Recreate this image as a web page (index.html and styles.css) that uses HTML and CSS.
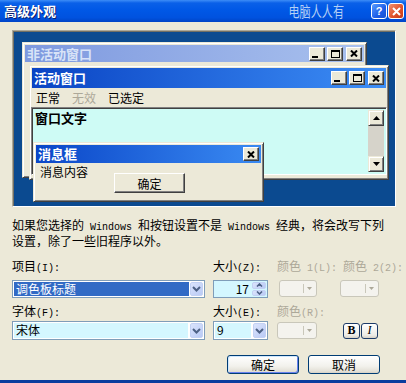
FILE: index.html
```html
<!DOCTYPE html>
<html lang="zh-CN">
<head>
    <meta charset="UTF-8">
    <title>高级外观</title>
    <link rel="stylesheet" href="styles.css">
</head>
<body>
    <div class="dialog">
        <div class="titlebar">
            <span class="title">高级外观</span>
            <span class="watermark">电脑人人有</span>
            <span class="tb-btn help">?</span>
            <span class="tb-btn close">
                <svg width="9" height="9" viewBox="0 0 9 9"><path d="M1 1l7 7M8 1l-7 7" stroke="#fff" stroke-width="2"/></svg>
            </span>
        </div>

        <!-- preview of the window parts -->
        <div class="preview">
            <div class="win inactive">
                <div class="caption">
                    <span class="cap-text">非活动窗口</span>
                    <span class="cap-btns">
                        <span class="cap-btn min"><svg width="6" height="2"><rect width="6" height="2"/></svg></span>
                        <span class="cap-btn"><svg width="9" height="8"><rect x="0.5" y="0.5" width="8" height="7" fill="none" stroke="#000"/><rect width="9" height="2"/></svg></span>
                        <span class="cap-btn gap"><svg width="8" height="7"><path d="M1 0.5l6 6M7 0.5l-6 6" stroke="#000" stroke-width="2"/></svg></span>
                    </span>
                </div>
            </div>

            <div class="win active">
                <div class="caption">
                    <span class="cap-text">活动窗口</span>
                    <span class="cap-btns">
                        <span class="cap-btn min"><svg width="6" height="2"><rect width="6" height="2"/></svg></span>
                        <span class="cap-btn"><svg width="9" height="8"><rect x="0.5" y="0.5" width="8" height="7" fill="none" stroke="#000"/><rect width="9" height="2"/></svg></span>
                        <span class="cap-btn gap"><svg width="8" height="7"><path d="M1 0.5l6 6M7 0.5l-6 6" stroke="#000" stroke-width="2"/></svg></span>
                    </span>
                </div>
                <div class="menu">
                    <span>正常</span>
                    <span class="dim">无效</span>
                    <span>已选定</span>
                </div>
                <div class="wintext">
                    <span class="wintext-label">窗口文字</span>
                    <div class="scrollbar">
                        <span class="sb-btn"><svg width="7" height="4"><path d="M3.5 0L7 4H0z"/></svg></span>
                        <span class="sb-track"></span>
                        <span class="sb-btn"><svg width="7" height="4"><path d="M0 0h7L3.5 4z"/></svg></span>
                    </div>
                </div>
            </div>

            <div class="win msgbox">
                <div class="caption">
                    <span class="cap-text">消息框</span>
                    <span class="cap-btns">
                        <span class="cap-btn"><svg width="8" height="7"><path d="M1 0.5l6 6M7 0.5l-6 6" stroke="#000" stroke-width="2"/></svg></span>
                    </span>
                </div>
                <div class="msg-body">
                    <span class="msg-text">消息内容</span>
                    <span class="msg-ok">确定</span>
                </div>
            </div>
        </div>

        <p class="desc">如果您选择的<span class="lat"> Windows </span>和按钮设置不是<span class="lat"> Windows </span>经典，将会改写下列<br>设置，除了一些旧程序以外。</p>

        <div class="form">
            <span class="label">项目<span class="lat">(I):</span></span>
            <span class="label">大小<span class="lat">(Z):</span></span>
            <span class="label grey">颜色<span class="lat"> 1(L):</span></span>
            <span class="label grey col4">颜色<span class="lat"> 2(2):</span></span>

            <div class="combo item-combo">
                <span class="combo-text selected">调色板标题</span>
                <span class="combo-arrow"><svg width="9" height="6"><path d="M1 1l3.5 3.5L8 1" stroke="#4d6185" stroke-width="2" fill="none"/></svg></span>
            </div>
            <div class="spin">
                <span class="spin-text">17</span>
                <span class="spin-btns">
                    <span class="spin-btn"><svg width="7" height="4"><path d="M1 3.5l2.5-2.5L6 3.5" stroke="#4d6185" stroke-width="1.6" fill="none"/></svg></span>
                    <span class="spin-btn"><svg width="7" height="4"><path d="M1 0.5l2.5 2.5L6 0.5" stroke="#4d6185" stroke-width="1.6" fill="none"/></svg></span>
                </span>
            </div>
            <div class="color-btn c1"><span class="sep"></span><svg width="5" height="3"><path d="M0 0h5L2.5 3z" fill="#aca899"/></svg></div>
            <div class="color-btn c2"><span class="sep"></span><svg width="5" height="3"><path d="M0 0h5L2.5 3z" fill="#aca899"/></svg></div>

            <span class="label row3">字体<span class="lat">(F):</span></span>
            <span class="label row3">大小<span class="lat">(E):</span></span>
            <span class="label row3 grey">颜色<span class="lat">(R):</span></span>
            <span></span>

            <div class="combo font-combo">
                <span class="combo-text">宋体</span>
                <span class="combo-arrow"><svg width="9" height="6"><path d="M1 1l3.5 3.5L8 1" stroke="#4d6185" stroke-width="2" fill="none"/></svg></span>
            </div>
            <div class="combo size-combo">
                <span class="combo-text">9</span>
                <span class="combo-arrow"><svg width="9" height="6"><path d="M1 1l3.5 3.5L8 1" stroke="#4d6185" stroke-width="2" fill="none"/></svg></span>
            </div>
            <div class="color-btn c3"><span class="sep"></span><svg width="5" height="3"><path d="M0 0h5L2.5 3z" fill="#aca899"/></svg></div>
            <div class="style-btns">
                <span class="style-btn bold">B</span>
                <span class="style-btn italic">I</span>
            </div>
        </div>

        <div class="footer">
            <span class="btn default">确定</span>
            <span class="btn">取消</span>
        </div>

        <div class="frame-bottom"></div>
    </div>
</body>
</html>
```

FILE: styles.css
```css
* {
    box-sizing: border-box;
}
body {
    margin: 0;
    font-family: "Noto Sans CJK SC", "Liberation Sans", sans-serif;
    font-size: 12px;
    color: #000;
}
.dialog {
    width: 406px;
    height: 383px;
    background: #ece9d8;
    display: flex;
    flex-direction: column;
    overflow: hidden;
}
.lat {
    font-family: "Liberation Mono", monospace;
    font-size: 10px;
}

/* title bar */
.titlebar {
    height: 22px;
    flex-shrink: 0;
    display: flex;
    align-items: center;
    padding: 0 2px 0 4px;
    background: linear-gradient(#3d8df7 0, #0a60e8 3px, #0058e6 45%, #0052df 80%, #0044c6 100%);
}
.title {
    color: #fff;
    font-weight: bold;
    font-size: 13px;
    line-height: 16px;
    text-shadow: 1px 1px #0a1e6e;
}
.watermark {
    margin-left: auto;
    margin-right: 27px;
    color: #b4cff5;
    font-size: 15px;
    line-height: 16px;
    transform: scaleX(0.74);
    transform-origin: right center;
}
.tb-btn {
    width: 16px;
    height: 16px;
    border: 1px solid #fff;
    border-radius: 3px;
    display: flex;
    align-items: center;
    justify-content: center;
    color: #fff;
    font-weight: bold;
    font-family: "Liberation Sans", sans-serif;
    font-size: 11px;
}
.help {
    background: linear-gradient(135deg, #5a9cff, #1c5ee8 60%, #1a50d0);
}
.close {
    margin-left: 1px;
    background: linear-gradient(135deg, #f09070, #e0542c 55%, #c43a18);
}

/* preview */
.preview {
    position: relative;
    margin: 8px 0 0 12px;
    width: 384px;
    height: 177px;
    flex-shrink: 0;
    background: #0b4a90;
    border: 1px solid;
    border-color: #aca899 #fff #fff #aca899;
    box-shadow: inset 1px 1px #716f64;
}
.win {
    position: absolute;
    background: #ece9d8;
    padding: 2px;
    border: 1px solid;
    border-color: #ece9d8 #404040 #404040 #ece9d8;
    box-shadow: inset 1px 1px #fff, inset -1px -1px #808080;
}
.inactive {
    left: 9px;
    top: 11px;
    width: 345px;
    height: 136px;
}
.active {
    left: 16px;
    top: 34px;
    width: 360px;
    height: 115px;
}
.msgbox {
    left: 20px;
    top: 111px;
    width: 231px;
    height: 60px;
}
.caption {
    display: flex;
    align-items: center;
    padding: 0 2px 0 2px;
}
.cap-text {
    font-weight: bold;
    font-size: 13px;
    line-height: 16px;
}
.inactive .caption {
    height: 17px;
    background: linear-gradient(to right, #7e99df, #a9c1ee);
    color: #d8e3f7;
}
.active .caption {
    height: 20px;
    background: linear-gradient(to right, #0a44c4, #3d8ef6);
    color: #fff;
}
.msgbox .caption {
    height: 18px;
    background: linear-gradient(to right, #0a46c8, #3a8af2);
    color: #fff;
}
.cap-btns {
    margin-left: auto;
    display: flex;
    gap: 2px;
}
.cap-btn {
    width: 16px;
    height: 14px;
    background: #ece9d8;
    border: 1px solid;
    border-color: #fff #404040 #404040 #fff;
    box-shadow: inset -1px -1px #808080;
    display: flex;
    align-items: center;
    justify-content: center;
}
.cap-btn svg {
    display: block;
}
.cap-btn.min svg {
    margin: 6px 4px 0 0;
}
.cap-btn.gap {
    margin-left: 1px;
}
.menu {
    height: 19px;
    display: flex;
    align-items: center;
    gap: 12px;
    padding-left: 4px;
}
.dim {
    color: #aca899;
}
.wintext {
    display: flex;
    height: 68px;
    margin: 0 -1px 0 -1px;
    padding: 2px;
    background: #cefbf5;
    border: 1px solid;
    border-color: #808080 #fff #fff #808080;
    box-shadow: inset 1px 1px #404040;
}
.wintext-label {
    font-weight: bold;
    font-size: 13px;
    line-height: 16px;
    padding-left: 1px;
}
.scrollbar {
    margin-left: auto;
    width: 16px;
    display: flex;
    flex-direction: column;
}
.sb-btn {
    height: 16px;
    background: #ece9d8;
    border: 1px solid;
    border-color: #ece9d8 #404040 #404040 #ece9d8;
    box-shadow: inset 1px 1px #fff, inset -1px -1px #808080;
    display: flex;
    align-items: center;
    justify-content: center;
}
.sb-track {
    flex: 1;
    background: #d6d3ca;
}
.msg-body {
    display: flex;
    align-items: flex-start;
    padding-left: 4px;
}
.msg-text {
    line-height: 14px;
    margin-top: 2px;
}
.msg-ok {
    margin: 10px 0 0 26px;
    width: 71px;
    height: 20px;
    display: flex;
    align-items: center;
    justify-content: center;
    border: 1px solid;
    border-color: #fff #404040 #404040 #fff;
    box-shadow: inset -1px -1px #808080;
}

/* description */
.desc {
    margin: 11px 0 0 12px;
    line-height: 13px;
    white-space: nowrap;
}

/* form */
.form {
    margin: 11px 0 0 12px;
    display: grid;
    grid-template-columns: 201px 64px 63px 40px;
    grid-template-rows: 22px 18px 23px 19px;
}
.label {
    line-height: 14px;
    padding-top: 1px;
    white-space: nowrap;
}
.label.row3 {
    padding-top: 6px;
}
.grey {
    color: #aca899;
}
.col4 {
    padding-left: 3px;
}
.combo {
    display: flex;
    border: 1px solid #7f9db9;
    background: #fff;
    padding: 1px;
}
.item-combo {
    width: 193px;
}
.font-combo {
    width: 193px;
}
.size-combo {
    width: 55px;
}
.combo-text {
    flex: 1;
    line-height: 14px;
    padding-left: 2px;
}
.font-combo .combo-text,
.size-combo .combo-text {
    background: #d4f7ff;
    margin-right: 2px;
}
.combo-text.selected {
    background: #316ac5;
    color: #fff;
    margin-right: 1px;
}
.combo-arrow {
    width: 13px;
    background: linear-gradient(135deg, #dbe4fc, #b9caf5);
    border: 1px solid #c3d1f4;
    border-radius: 2px;
    display: flex;
    align-items: center;
    justify-content: center;
}
.spin {
    width: 55px;
    display: flex;
    border: 1px solid #7f9db9;
    background: #d4f7ff;
    padding: 1px;
}
.spin-text {
    flex: 1;
    text-align: right;
    padding-right: 3px;
    line-height: 14px;
}
.spin-btns {
    width: 14px;
    display: flex;
    flex-direction: column;
    gap: 1px;
}
.spin-btn {
    flex: 1;
    background: linear-gradient(135deg, #dbe4fc, #b9caf5);
    border: 1px solid #c3d1f4;
    border-radius: 2px;
    display: flex;
    align-items: center;
    justify-content: center;
}
.color-btn {
    height: 17px;
    display: flex;
    align-items: center;
    justify-content: flex-end;
    padding-right: 4px;
    border: 1px solid #c9c7ba;
    border-radius: 3px;
    background: #f4f3ee;
}
.color-btn .sep {
    width: 1px;
    height: 9px;
    background: #c9c7ba;
    margin-right: 3px;
}
.c1 {
    width: 38px;
    margin-left: 2px;
}
.c2 {
    width: 39px;
}
.c3 {
    width: 40px;
    align-self: center;
}
.style-btns {
    display: flex;
    gap: 1px;
    margin-left: 3px;
    align-self: center;
}
.style-btn {
    width: 17px;
    height: 16px;
    border: 1px solid #1c3a68;
    border-radius: 3px;
    background: linear-gradient(#fff, #ecebe6 80%, #d6d0c5);
    display: flex;
    align-items: center;
    justify-content: center;
    font-family: "Liberation Serif", serif;
    font-size: 12px;
}
.bold {
    font-weight: bold;
}
.italic {
    font-style: italic;
}

/* footer buttons */
.footer {
    margin: 15px 0 0 227px;
    display: flex;
    gap: 9px;
}
.btn {
    width: 72px;
    height: 19px;
    display: flex;
    align-items: center;
    justify-content: center;
    border: 1px solid #003c74;
    border-radius: 3px;
    background: linear-gradient(#fff, #f2f1ec 60%, #e3e0d6 90%, #d6d0c5);
}
.btn.default {
    box-shadow: inset 1px 1px #cee7ff, inset -1px -1px #6982ee;
}
.frame-bottom {
    margin-top: auto;
    height: 3px;
    background: #0a3d9e;
}
```
